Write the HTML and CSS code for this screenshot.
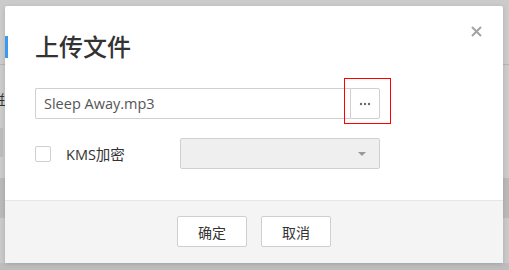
FILE: index.html
```html
<!DOCTYPE html>
<html lang="zh-CN">
<head>
  <meta charset="UTF-8">
  <title>上传文件</title>
  <link rel="stylesheet" href="styles.css">
</head>
<body>
  <!-- page behind the mask -->
  <div class="backdrop">
    <div class="band band-top"></div>
    <div class="band band-line"></div>
    <div class="band band-mid">
      <span class="peek-text">拼</span>
      <span class="peek-box"></span>
    </div>
    <div class="band band-dark"></div>
    <div class="band band-low"></div>
    <div class="band band-bottom"></div>
  </div>

  <div class="modal">
    <span class="tab-mark"></span>
    <button class="close" type="button" aria-label="关闭">
      <svg width="11" height="11" viewBox="0 0 11 11"><path d="M1 1L10 10M10 1L1 10" stroke="#a3a3a3" stroke-width="2" fill="none"/></svg>
    </button>

    <div class="modal-body">
      <h1 class="title">上传文件</h1>

      <div class="file-row">
        <div class="file-input">Sleep Away.mp3</div>
        <button class="browse" type="button">
          <svg width="12" height="4" viewBox="0 0 12 4"><circle cx="2" cy="2" r="1.2" fill="#6b6b6b"/><circle cx="6" cy="2" r="1.2" fill="#6b6b6b"/><circle cx="10" cy="2" r="1.2" fill="#6b6b6b"/></svg>
        </button>
        <span class="highlight"></span>
      </div>

      <div class="kms-row">
        <span class="checkbox"></span>
        <span class="kms-label">KMS加密</span>
        <div class="select"><span class="caret"></span></div>
      </div>
    </div>

    <div class="modal-footer">
      <button class="btn" type="button">确定</button>
      <button class="btn" type="button">取消</button>
    </div>
  </div>
</body>
</html>
```

FILE: styles.css
```css
body {
  margin: 0;
  width: 509px;
  height: 270px;
  overflow: hidden;
  background: #c6c6c6;
  font-family: "Open Sans", "Noto Sans CJK SC", sans-serif;
}

.backdrop {
  display: flex;
  flex-direction: column;
  height: 270px;
}

.band-top {
  height: 64px;
  background: #cbcbcb;
}

.band-line {
  height: 1px;
  background: #b4b4b4;
}

.band-mid {
  height: 113px;
  background: #cbcbcb;
  display: flex;
  flex-direction: column;
  align-items: flex-start;
  padding-top: 27px;
  box-sizing: border-box;
}

.peek-text {
  margin-left: -8px;
  font-size: 13px;
  line-height: 14px;
  color: #333;
  text-decoration: underline;
  font-family: "Noto Sans CJK SC", sans-serif;
}

.peek-box {
  margin-top: 22px;
  width: 3px;
  height: 29px;
  background: #bcbcbc;
}

.band-dark {
  height: 40px;
  background: #b9b9b9;
}

.band-low {
  height: 45px;
  background: #c9c9c9;
}

.band-bottom {
  flex: 1;
  background: #bdbdbd;
}

.modal {
  position: absolute;
  left: 5px;
  top: 6px;
  width: 498px;
  height: 257px;
  background: #fff;
  border-radius: 2px;
  box-shadow: 0 1px 4px rgba(0, 0, 0, 0.15);
  display: flex;
  flex-direction: column;
}

.tab-mark {
  position: absolute;
  left: 0;
  top: 30px;
  width: 3px;
  height: 22px;
  background: #3b99f0;
}

.close {
  position: absolute;
  right: 21px;
  top: 20px;
  padding: 0;
  border: none;
  background: none;
  line-height: 0;
}

.modal-body {
  flex: 1;
  padding: 23px 30px 0;
}

.title {
  margin: 0;
  font-size: 24px;
  font-weight: 500;
  line-height: 34px;
  color: #333;
  font-family: "Noto Sans CJK SC", sans-serif;
}

.file-row {
  position: relative;
  display: flex;
  margin-top: 25px;
  width: 345px;
  height: 31px;
}

.file-input {
  flex: 1;
  box-sizing: border-box;
  border: 1px solid #d0d0d0;
  border-right: none;
  border-radius: 2px 0 0 2px;
  padding-left: 8px;
  font-size: 14.5px;
  line-height: 29px;
  color: #555;
}

.browse {
  width: 30px;
  box-sizing: border-box;
  border: 1px solid #d0d0d0;
  border-radius: 0 2px 2px 0;
  background: #fff;
  padding: 0;
  line-height: 0;
}

.highlight {
  position: absolute;
  left: 309px;
  top: -10px;
  width: 45px;
  height: 44px;
  border: 1px solid #f00;
}

.kms-row {
  display: flex;
  align-items: center;
  margin-top: 19px;
  height: 31px;
}

.checkbox {
  width: 14px;
  height: 14px;
  border: 1px solid #cfcfcf;
  border-radius: 2px;
  background: #fff;
}

.kms-label {
  margin-left: 15px;
  width: 114px;
  font-size: 14.5px;
  color: #333;
}

.select {
  width: 200px;
  height: 31px;
  box-sizing: border-box;
  border: 1px solid #d0d0d0;
  border-radius: 2px;
  background: #efefef;
  display: flex;
  align-items: center;
  justify-content: flex-end;
  padding-right: 13px;
}

.caret {
  width: 0;
  height: 0;
  border-left: 4px solid transparent;
  border-right: 4px solid transparent;
  border-top: 4px solid #999;
}

.modal-footer {
  height: 63px;
  box-sizing: border-box;
  border-top: 1px solid #e6e6e6;
  background: #f4f4f4;
  display: flex;
  justify-content: center;
  gap: 14px;
  padding-top: 15px;
}

.btn {
  width: 70px;
  height: 31px;
  border: 1px solid #cfcfcf;
  border-radius: 2px;
  background: #fff;
  font-family: "Noto Sans CJK SC", sans-serif;
  font-size: 14px;
  color: #333;
  padding: 0;
}
```
